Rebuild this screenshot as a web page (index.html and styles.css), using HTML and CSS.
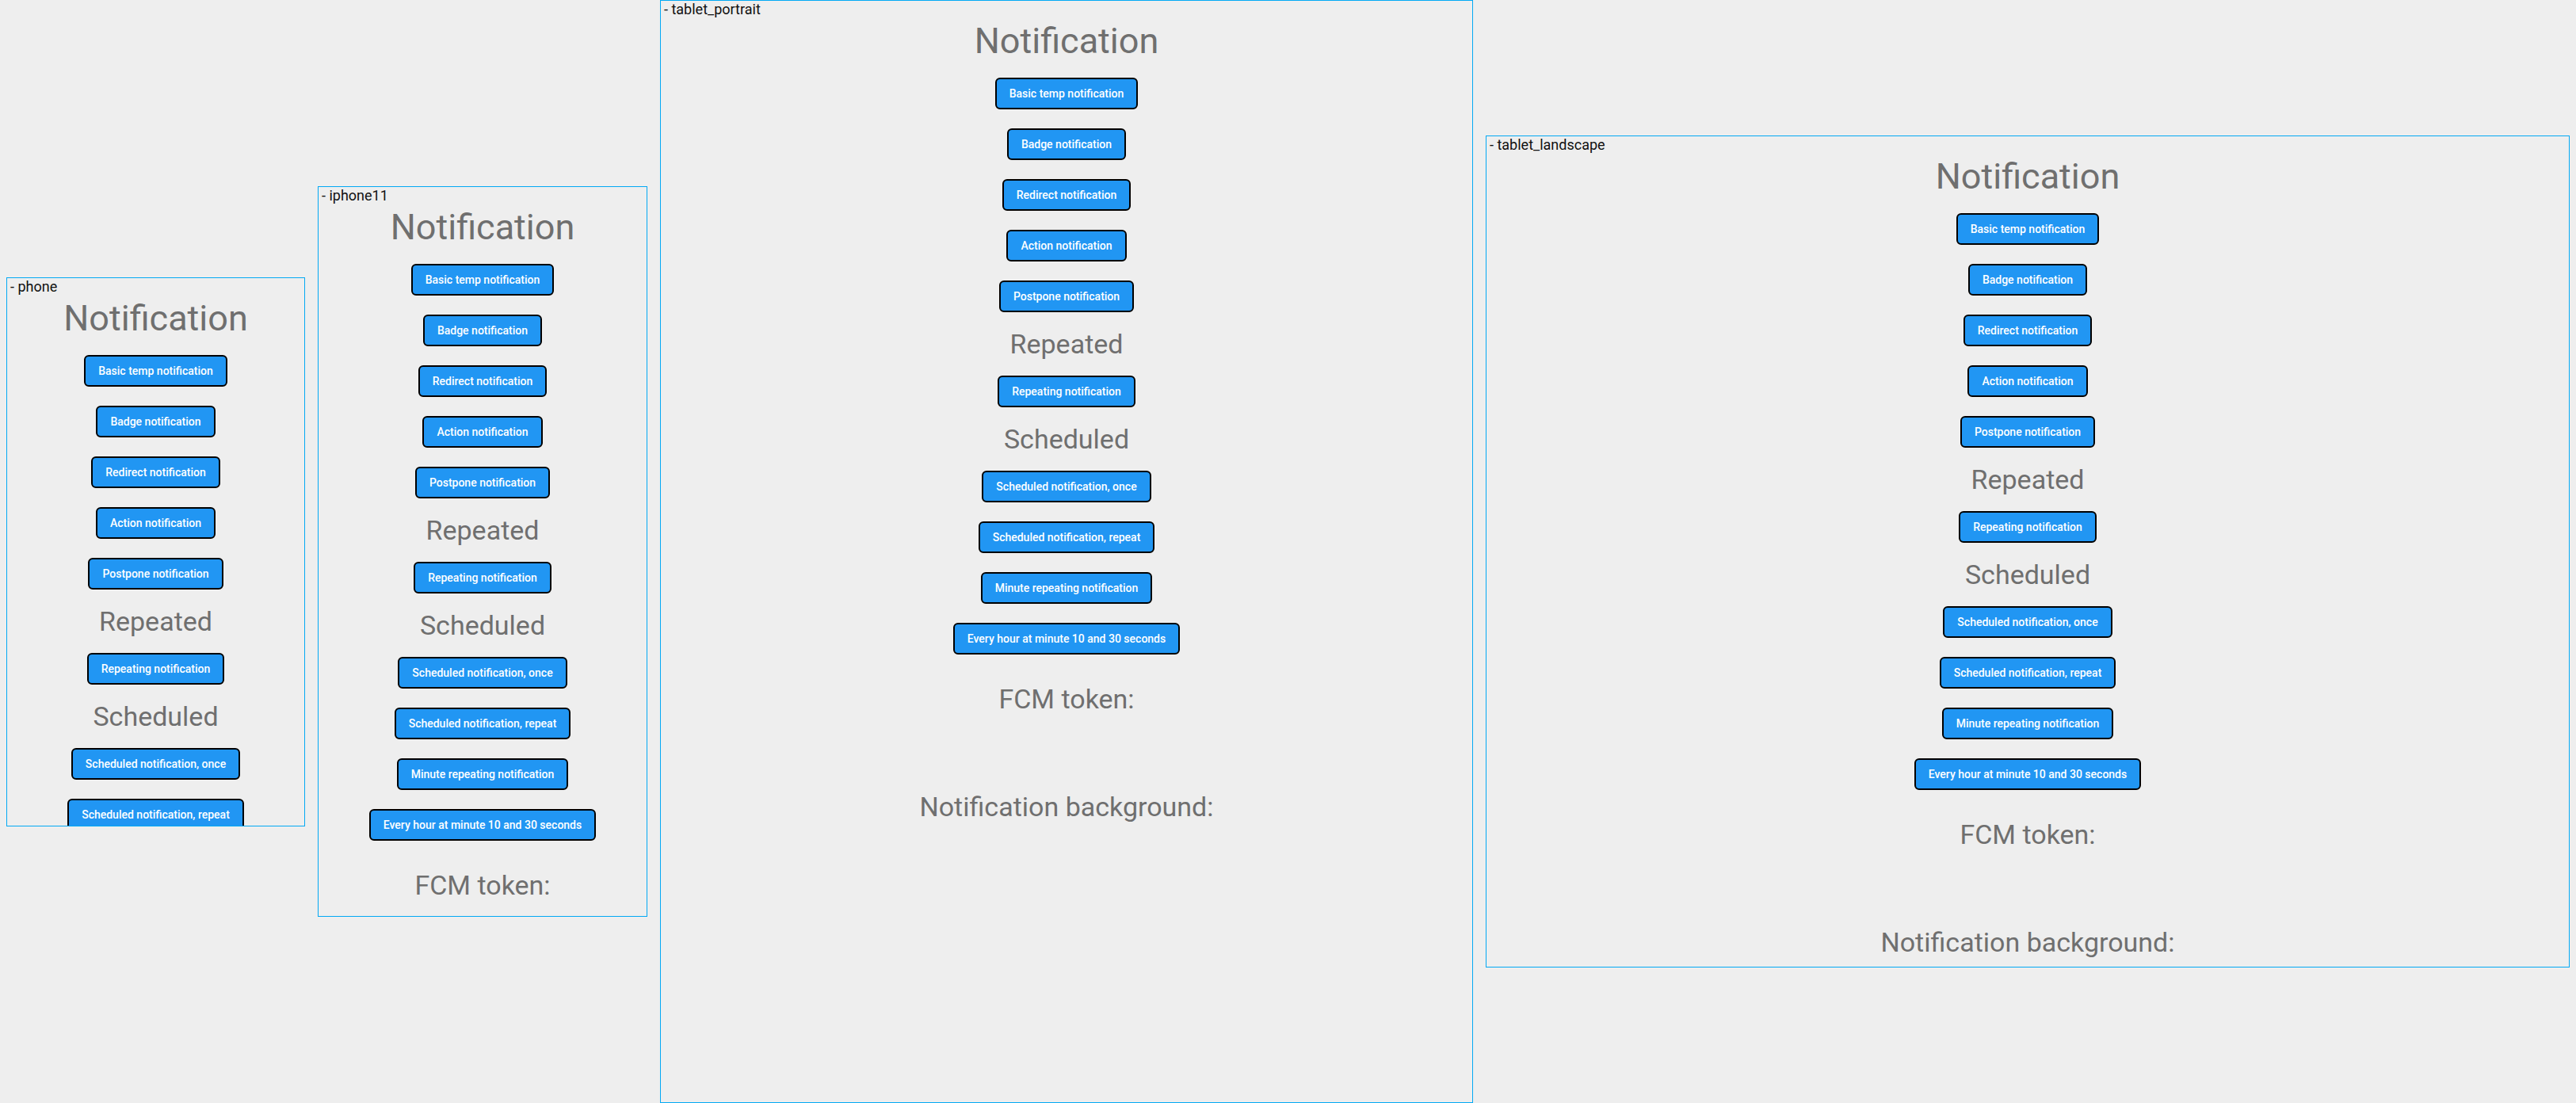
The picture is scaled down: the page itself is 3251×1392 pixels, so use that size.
FILE: index.html
```html
<!DOCTYPE html>
<html lang="en">
<head>
<meta charset="utf-8">
<meta name="viewport" content="width=device-width, initial-scale=1">
<title>Notification</title>
<link rel="stylesheet" href="styles.css">
</head>
<body>
<main class="board">
  <section class="device device-phone">
    <p class="device-name">- phone</p>
    <h1 class="title">Notification</h1>
    <div class="actions">
      <button class="action" type="button">Basic temp notification</button>
      <button class="action" type="button">Badge notification</button>
      <button class="action" type="button">Redirect notification</button>
      <button class="action" type="button">Action notification</button>
      <button class="action" type="button">Postpone notification</button>
    </div>
    <h2 class="heading">Repeated</h2>
    <div class="actions">
      <button class="action" type="button">Repeating notification</button>
    </div>
    <h2 class="heading">Scheduled</h2>
    <div class="actions">
      <button class="action" type="button">Scheduled notification, once</button>
      <button class="action" type="button">Scheduled notification, repeat</button>
    </div>
  </section>

  <section class="device device-iphone">
    <p class="device-name">- iphone11</p>
    <h1 class="title">Notification</h1>
    <div class="actions">
      <button class="action" type="button">Basic temp notification</button>
      <button class="action" type="button">Badge notification</button>
      <button class="action" type="button">Redirect notification</button>
      <button class="action" type="button">Action notification</button>
      <button class="action" type="button">Postpone notification</button>
    </div>
    <h2 class="heading">Repeated</h2>
    <div class="actions">
      <button class="action" type="button">Repeating notification</button>
    </div>
    <h2 class="heading">Scheduled</h2>
    <div class="actions">
      <button class="action" type="button">Scheduled notification, once</button>
      <button class="action" type="button">Scheduled notification, repeat</button>
      <button class="action" type="button">Minute repeating notification</button>
      <button class="action" type="button">Every hour at minute 10 and 30 seconds</button>
    </div>
    <div class="details">
      <h2 class="heading">FCM token:</h2>
    </div>
  </section>

  <section class="device device-portrait">
    <p class="device-name">- tablet_portrait</p>
    <h1 class="title">Notification</h1>
    <div class="actions">
      <button class="action" type="button">Basic temp notification</button>
      <button class="action" type="button">Badge notification</button>
      <button class="action" type="button">Redirect notification</button>
      <button class="action" type="button">Action notification</button>
      <button class="action" type="button">Postpone notification</button>
    </div>
    <h2 class="heading">Repeated</h2>
    <div class="actions">
      <button class="action" type="button">Repeating notification</button>
    </div>
    <h2 class="heading">Scheduled</h2>
    <div class="actions">
      <button class="action" type="button">Scheduled notification, once</button>
      <button class="action" type="button">Scheduled notification, repeat</button>
      <button class="action" type="button">Minute repeating notification</button>
      <button class="action" type="button">Every hour at minute 10 and 30 seconds</button>
    </div>
    <div class="details">
      <h2 class="heading">FCM token:</h2>
      <h2 class="heading">Notification background:</h2>
    </div>
  </section>

  <section class="device device-landscape">
    <p class="device-name">- tablet_landscape</p>
    <h1 class="title">Notification</h1>
    <div class="actions">
      <button class="action" type="button">Basic temp notification</button>
      <button class="action" type="button">Badge notification</button>
      <button class="action" type="button">Redirect notification</button>
      <button class="action" type="button">Action notification</button>
      <button class="action" type="button">Postpone notification</button>
    </div>
    <h2 class="heading">Repeated</h2>
    <div class="actions">
      <button class="action" type="button">Repeating notification</button>
    </div>
    <h2 class="heading">Scheduled</h2>
    <div class="actions">
      <button class="action" type="button">Scheduled notification, once</button>
      <button class="action" type="button">Scheduled notification, repeat</button>
      <button class="action" type="button">Minute repeating notification</button>
      <button class="action" type="button">Every hour at minute 10 and 30 seconds</button>
    </div>
    <div class="details">
      <h2 class="heading">FCM token:</h2>
      <h2 class="heading">Notification background:</h2>
    </div>
  </section>
</main>
</body>
</html>
```
FILE: styles.css
```css
* {
  box-sizing: border-box;
}

body {
  margin: 0;
  background: #eeeeee;
  font-family: Roboto, sans-serif;
}

.board {
  display: grid;
  grid-template-columns: 377fr 416fr 1026fr 1368fr;
  gap: 16px;
  align-items: center;
  padding: 0 8px;
}

.device {
  display: flex;
  flex-direction: column;
  align-items: center;
  gap: 20px;
  min-width: 0;
  overflow: hidden;
  border: 1px solid #03a9f4;
}

.device > * {
  flex-shrink: 0;
}

.device-phone {
  aspect-ratio: 377 / 693;
}

.device-iphone {
  aspect-ratio: 416 / 922;
}

.device-portrait {
  aspect-ratio: 1026 / 1392;
}

.device-landscape {
  aspect-ratio: 1368 / 1050;
}

.device-name {
  align-self: stretch;
  margin: 0 0 -20px;
  padding: 0 0 2px 4px;
  color: #111111;
  font-size: 18px;
  line-height: 22px;
}

.title,
.heading {
  margin: 0;
  color: #6f6f6f;
  font-weight: 400;
  white-space: nowrap;
}

.title {
  font-size: 45px;
  line-height: 53px;
}

.heading {
  font-size: 34px;
  line-height: 40px;
}

.actions {
  display: flex;
  flex-direction: column;
  align-items: center;
  gap: 24px;
}

.action {
  height: 40px;
  padding: 0 16px;
  border: 2px solid #000000;
  border-radius: 6px;
  background: #2196f3;
  color: #ffffff;
  font-family: inherit;
  font-size: 14px;
  font-weight: 500;
  line-height: 16px;
  white-space: nowrap;
}

.details {
  display: flex;
  flex-direction: column;
  align-items: center;
  gap: 96px;
  padding-top: 16px;
}
```
